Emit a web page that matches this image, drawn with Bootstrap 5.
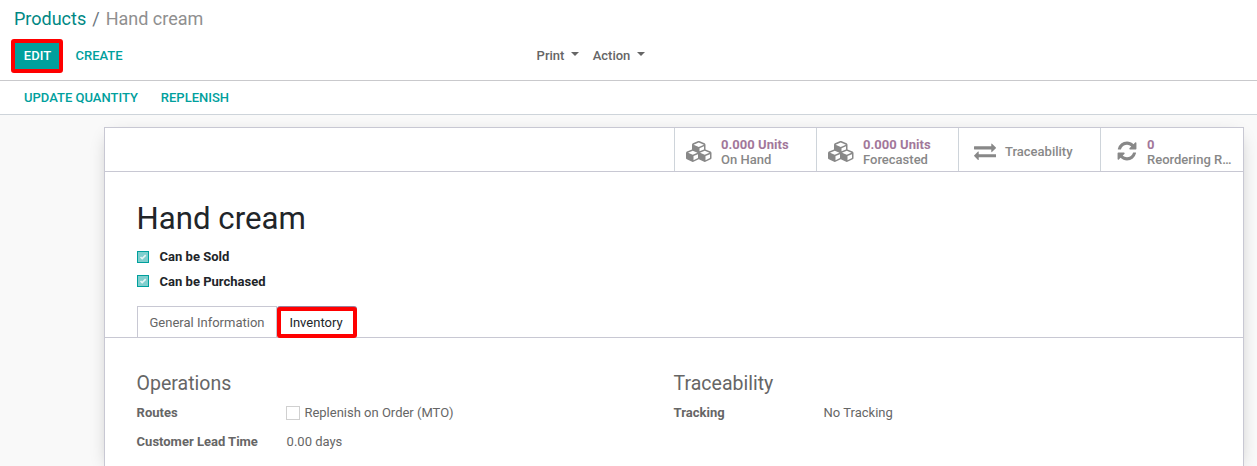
<!DOCTYPE html>
<html lang="en">
<head>
<meta charset="utf-8">
<meta name="viewport" content="width=device-width, initial-scale=1">
<title>Hand cream</title>
<link href="https://cdn.jsdelivr.net/npm/bootstrap@5.3.0/dist/css/bootstrap.min.css" rel="stylesheet">
<style>
body{font:400 13px/20px Roboto,"Liberation Sans",sans-serif;color:#666;background:#f9f9f9;height:466px;overflow:hidden}
.panel{height:81px;border-bottom:1px solid #c9c9cc!important;padding:5px 0 0 14px}
.crumbs{font-size:18px;line-height:27px;color:#6c757d}
.crumbs a{color:#008784}
.crumbs .active{color:#8f8f8f}
.crumbs .sep{padding:0 6px}
.tools{height:34px;margin:7px 0 0 -3px}
.tools .btn,.status .btn{font-size:13px;line-height:20px;font-weight:500;padding:0;border:0;border-radius:0;color:#00a09d}
.tools .btn.edit{background:#00a09d;color:#fff;border:4px solid #f00;border-radius:3px;width:52px;height:34px;padding-left:1px}
.tools .btn.create{margin-left:12.500px}
.menus{margin-left:414px;gap:13.500px}
.tools .menus .btn{color:#666}
.menus .dropdown-toggle::after{margin-left:6.800px;border-width:4px 4px 0;vertical-align:4px}
.status{height:34px;border-bottom:1px solid #ced4da!important;padding-left:24px;gap:23px}
.sheet{width:1140px;height:339px;margin:12px 0 0 104px;border:1px solid #c8c8d3;border-bottom:0;overflow:hidden;box-shadow:0 5px 18px -7px rgba(0,0,0,.33)}
.stats{height:44px;border-bottom:1px solid #c8c8d3!important}
.stat{width:142px;border-left:1px solid #ced4da!important;font-weight:500;line-height:15px;color:#888;padding:4px 0 0 11.200px}
.stat:last-child{width:143px}
.stat svg{fill:#888;flex:none}
.stat .ico{width:28px;margin:-1px 6.800px 0 0;flex:none}
.stat .ico.narrow{padding-left:1px}
.stat .val{color:#a2779a;font-weight:700;letter-spacing:.04px}
.body-pad{padding:0 31.600px}
h1{font-size:31.2px;line-height:38px;font-weight:400;color:#212529;margin:28px 0 0}
.checks{padding-top:7px}
.check{height:24.500px;color:#212529;font-weight:700;gap:11px}
.tick{width:12px;height:12px;background:#80cfce;border:1px solid #00a09d;flex:none}
.check+.check .tick{margin-top:-1px}
.tabs{height:32px;margin-top:12px;padding-left:32px;border-bottom:1px solid #c8c8d3!important}
.tabs a{font-size:13px;line-height:20px;text-decoration:none}
.tab1{width:140px;height:31px;border:1px solid #c8c8d3;border-width:1px 1px 0 1px;color:#666;padding-top:1px}
.tab2{width:80px;height:31px;margin-top:1px;border:4px solid #f00;border-radius:3px;color:#212529;padding-right:2px;background:#fff;box-shadow:0 -1px #9b7f9b}
.groups{padding-top:34px}
.groups>div{width:537px}
h2{font-size:19.500px;line-height:24px;font-weight:400;color:#666;margin:0 0 7px}
.field{height:29px;line-height:20px}
.field b{width:150px;font-weight:700}
.empty{width:14px;height:14px;border:1px solid #d0d0d0;margin:3px 4.400px 0 -.6px}
</style>
</head>
<body>
<header class="panel bg-white border-bottom">
  <div class="crumbs"><a href="#" class="text-decoration-none">Products</a><span class="sep">/</span><span class="active">Hand cream</span></div>
  <div class="tools d-flex align-items-center">
    <button class="btn edit">EDIT</button>
    <button class="btn create">CREATE</button>
    <div class="menus d-flex"><button class="btn dropdown-toggle">Print</button><button class="btn dropdown-toggle">Action</button></div>
  </div>
</header>
<nav class="status bg-white border-bottom d-flex align-items-center"><button class="btn">UPDATE QUANTITY</button><button class="btn">REPLENISH</button></nav>
<svg class="d-none">
  <symbol id="cubes" viewBox="0 0 2304 1792"><path d="M640 1632l384-192v-314l-384 164v342zm-64-454l404-173-404-173-404 173zm1088 454l384-192v-314l-384 164v342zm-64-454l404-173-404-173-404 173zm-448-293l384-165v-266l-384 164v267zm-64-379l441-189-441-189-441 189zm1088 518v416q0 36-19 67t-52 47l-448 224q-25 14-57 14t-57-14l-448-224q-4-2-7-4-2 2-7 4l-448 224q-25 14-57 14t-57-14l-448-224q-33-16-52-47t-19-67v-416q0-38 21.500-70t56.500-48l434-186v-400q0-38 21.500-70t56.500-48l448-192q23-10 50-10t50 10l448 192q35 16 56.500 48t21.500 70v400l434 186q36 16 57 48t21 70z"/></symbol>
</svg>
<main class="sheet bg-white">
  <div class="stats d-flex justify-content-end border-bottom">
    <div class="stat d-flex align-items-center border-start"><span class="ico d-flex"><svg width="27" height="21"><use href="#cubes"/></svg></span><div><div class="val">0.000 Units</div>On Hand</div></div>
    <div class="stat d-flex align-items-center border-start"><span class="ico d-flex"><svg width="27" height="21"><use href="#cubes"/></svg></span><div><div class="val">0.000 Units</div>Forecasted</div></div>
    <div class="stat d-flex align-items-center border-start"><span class="ico narrow d-flex justify-content-center"><svg width="22" height="22" viewBox="0 0 1792 1792"><path d="M1792 1184v192q0 13-9.500 22.500t-22.500 9.500h-1376v192q0 13-9.500 22.500t-22.500 9.500q-12 0-24-10l-319-320q-9-9-9-22 0-14 9-23l320-320q9-9 23-9 13 0 22.500 9.500t9.500 22.500v192h1376q13 0 22.500 9.500t9.500 22.500zm0-544q0 14-9 23l-320 320q-9 9-23 9-13 0-22.500-9.500t-9.500-22.500v-192h-1376q-13 0-22.500-9.500t-9.500-22.500v-192q0-13 9.500-22.500t22.500-9.500h1376v-192q0-14 9-23t23-9q12 0 24 10l319 319q9 9 9 23z"/></svg></span><div>Traceability</div></div>
    <div class="stat d-flex align-items-center border-start"><span class="ico narrow d-flex justify-content-center"><svg width="22" height="22" viewBox="0 0 1792 1792"><path d="M1639 1056q0 5-1 7-64 268-268 434.500t-478 166.500q-146 0-282.500-55t-243.500-157l-129 129q-19 19-45 19t-45-19-19-45v-448q0-26 19-45t45-19h448q26 0 45 19t19 45-19 45l-137 137q71 66 161 102t187 36q134 0 250-65t186-179q11-17 53-117 8-23 30-23h192q13 0 22.500 9.500t9.500 22.500zm25-800v448q0 26-19 45t-45 19h-448q-26 0-45-19t-19-45 19-45l138-138q-148-137-349-137-134 0-250 65t-186 179q-11 17-53 117-8 23-30 23h-199q-13 0-22.500-9.500t-9.500-22.500v-7q65-268 270-434.500t480-166.500q146 0 284 55.500t245 156.500l130-129q19-19 45-19t45 19 19 45z"/></svg></span><div><div class="val">0</div>Reordering R…</div></div>
  </div>
  <div class="body-pad">
    <h1>Hand cream</h1>
    <div class="checks">
      <div class="check d-flex align-items-center"><span class="tick d-flex"><svg width="10" height="10" viewBox="0 0 10 10" fill="none" stroke="#e4f5f5" stroke-width="1.700"><path d="M2.500 5l1.700 1.600L7.700 3.200"/></svg></span>Can be Sold</div>
      <div class="check d-flex align-items-center"><span class="tick d-flex"><svg width="10" height="10" viewBox="0 0 10 10" fill="none" stroke="#e4f5f5" stroke-width="1.700"><path d="M2.500 5l1.700 1.600L7.700 3.200"/></svg></span>Can be Purchased</div>
    </div>
  </div>
  <div class="tabs d-flex border-bottom">
    <a href="#" class="tab1 d-flex align-items-center justify-content-center">General Information</a>
    <a href="#" class="tab2 d-flex align-items-center justify-content-center">Inventory</a>
  </div>
  <div class="body-pad groups d-flex">
    <div>
      <h2>Operations</h2>
      <div class="field d-flex"><b>Routes</b><span class="empty"></span><span>Replenish on Order (MTO)</span></div>
      <div class="field d-flex"><b>Customer Lead Time</b><span>0.00 days</span></div>
    </div>
    <div>
      <h2>Traceability</h2>
      <div class="field d-flex"><b>Tracking</b><span>No Tracking</span></div>
    </div>
  </div>
</main>
<script src="https://cdn.jsdelivr.net/npm/bootstrap@5.3.0/dist/js/bootstrap.bundle.min.js"></script>
</body>
</html>
